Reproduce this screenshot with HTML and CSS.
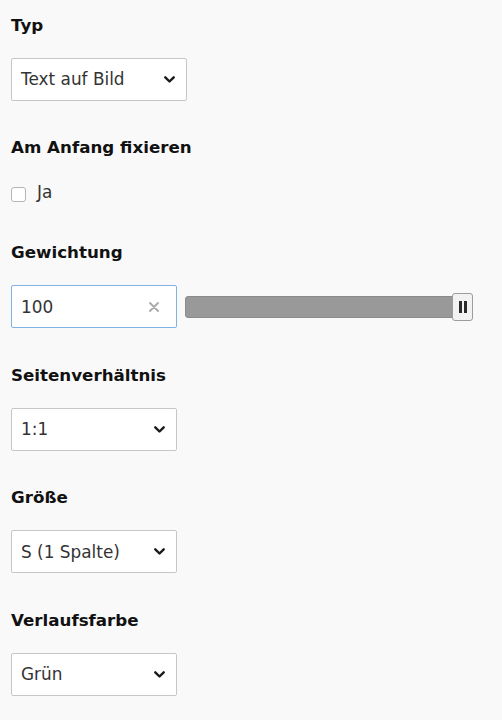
FILE: index.html
```html
<!DOCTYPE html>
<html lang="de">
<head>
<meta charset="utf-8">
<title>Formular</title>
<link rel="stylesheet" href="styles.css">
</head>
<body>
<div class="form">
  <div class="field">
    <div class="label">Typ</div>
    <div class="select select-wide">
      <span class="value">Text auf Bild</span>
      <svg class="chev" width="11" height="7" viewBox="0 0 11 7"><polyline points="1.3,1.3 5.5,5.5 9.7,1.3" fill="none" stroke="#1a1a1a" stroke-width="2.4" stroke-linecap="round" stroke-linejoin="round"/></svg>
    </div>
  </div>

  <div class="field">
    <div class="label">Am Anfang fixieren</div>
    <label class="check-row">
      <span class="checkbox"></span>
      <span class="check-text">Ja</span>
    </label>
  </div>

  <div class="field field-after-check">
    <div class="label">Gewichtung</div>
    <div class="range-row">
      <div class="input">
        <span class="value">100</span>
        <svg class="clear" width="10" height="10" viewBox="0 0 10 10"><path d="M1 1 L9 9 M9 1 L1 9" stroke="#a9a9a9" stroke-width="1.8" stroke-linecap="round"/></svg>
      </div>
      <div class="slider">
        <div class="track"></div>
        <div class="handle"><span class="bar"></span><span class="bar"></span></div>
      </div>
    </div>
  </div>

  <div class="field">
    <div class="label">Seitenverhältnis</div>
    <div class="select">
      <span class="value">1:1</span>
      <svg class="chev" width="11" height="7" viewBox="0 0 11 7"><polyline points="1.3,1.3 5.5,5.5 9.7,1.3" fill="none" stroke="#1a1a1a" stroke-width="2.4" stroke-linecap="round" stroke-linejoin="round"/></svg>
    </div>
  </div>

  <div class="field">
    <div class="label">Größe</div>
    <div class="select">
      <span class="value">S (1 Spalte)</span>
      <svg class="chev" width="11" height="7" viewBox="0 0 11 7"><polyline points="1.3,1.3 5.5,5.5 9.7,1.3" fill="none" stroke="#1a1a1a" stroke-width="2.4" stroke-linecap="round" stroke-linejoin="round"/></svg>
    </div>
  </div>

  <div class="field">
    <div class="label">Verlaufsfarbe</div>
    <div class="select">
      <span class="value">Grün</span>
      <svg class="chev" width="11" height="7" viewBox="0 0 11 7"><polyline points="1.3,1.3 5.5,5.5 9.7,1.3" fill="none" stroke="#1a1a1a" stroke-width="2.4" stroke-linecap="round" stroke-linejoin="round"/></svg>
    </div>
  </div>
</div>
</body>
</html>
```

FILE: styles.css
```css
html, body {
  margin: 0;
  padding: 0;
  background: #f9f9f9;
}

body {
  font-family: "DejaVu Sans", Verdana, sans-serif;
  font-size: 16.5px;
  color: #333;
}

.form {
  padding: 14.5px 11px 0 11px;
  display: flex;
  flex-direction: column;
  gap: 36.5px;
}

.field {
  display: flex;
  flex-direction: column;
  align-items: flex-start;
}

.field-after-check {
  margin-top: 3.5px;
}

.label {
  font-weight: bold;
  font-size: 16.7px;
  color: #111;
  line-height: 20px;
  margin-bottom: 23px;
}

.select {
  box-sizing: border-box;
  width: 166px;
  height: 43px;
  background: #fff;
  border: 1px solid #c6c6c6;
  border-radius: 2px;
  display: flex;
  align-items: center;
  justify-content: space-between;
  padding: 0 11px 0 9px;
  line-height: 20px;
}

.select-wide {
  width: 176px;
}

.value {
  color: #333;
  font-size: 16.9px;
}

.check-row {
  display: flex;
  align-items: flex-start;
  gap: 11px;
  line-height: 20px;
  margin-top: 2px;
}

.checkbox {
  box-sizing: border-box;
  width: 15px;
  height: 15px;
  margin-top: 5px;
  background: #fff;
  border: 1px solid #b5b5b5;
  border-radius: 3px;
}

.check-text {
  color: #333;
  font-size: 16.9px;
}

.range-row {
  display: flex;
  align-items: flex-start;
  gap: 8px;
}

.input {
  box-sizing: border-box;
  width: 166px;
  height: 43px;
  background: #fff;
  border: 1px solid #82b2e4;
  border-radius: 2px;
  display: flex;
  align-items: center;
  justify-content: space-between;
  padding: 0 17px 0 9px;
  line-height: 20px;
}

.clear {
  margin-top: 1px;
}

.slider {
  position: relative;
  width: 288px;
  height: 43px;
}

.track {
  box-sizing: border-box;
  margin-top: 11px;
  width: 284px;
  height: 22px;
  background: #999;
  border: 1px solid #8c8c8c;
  border-radius: 3px;
}

.handle {
  position: absolute;
  right: 0;
  top: 8px;
  box-sizing: border-box;
  width: 21px;
  height: 28px;
  background: #f2f2f2;
  border: 1px solid #9c9c9c;
  border-radius: 3px;
  display: flex;
  align-items: center;
  justify-content: center;
  gap: 2px;
}

.bar {
  width: 3px;
  height: 12px;
  background: #2a2a2a;
}
```
